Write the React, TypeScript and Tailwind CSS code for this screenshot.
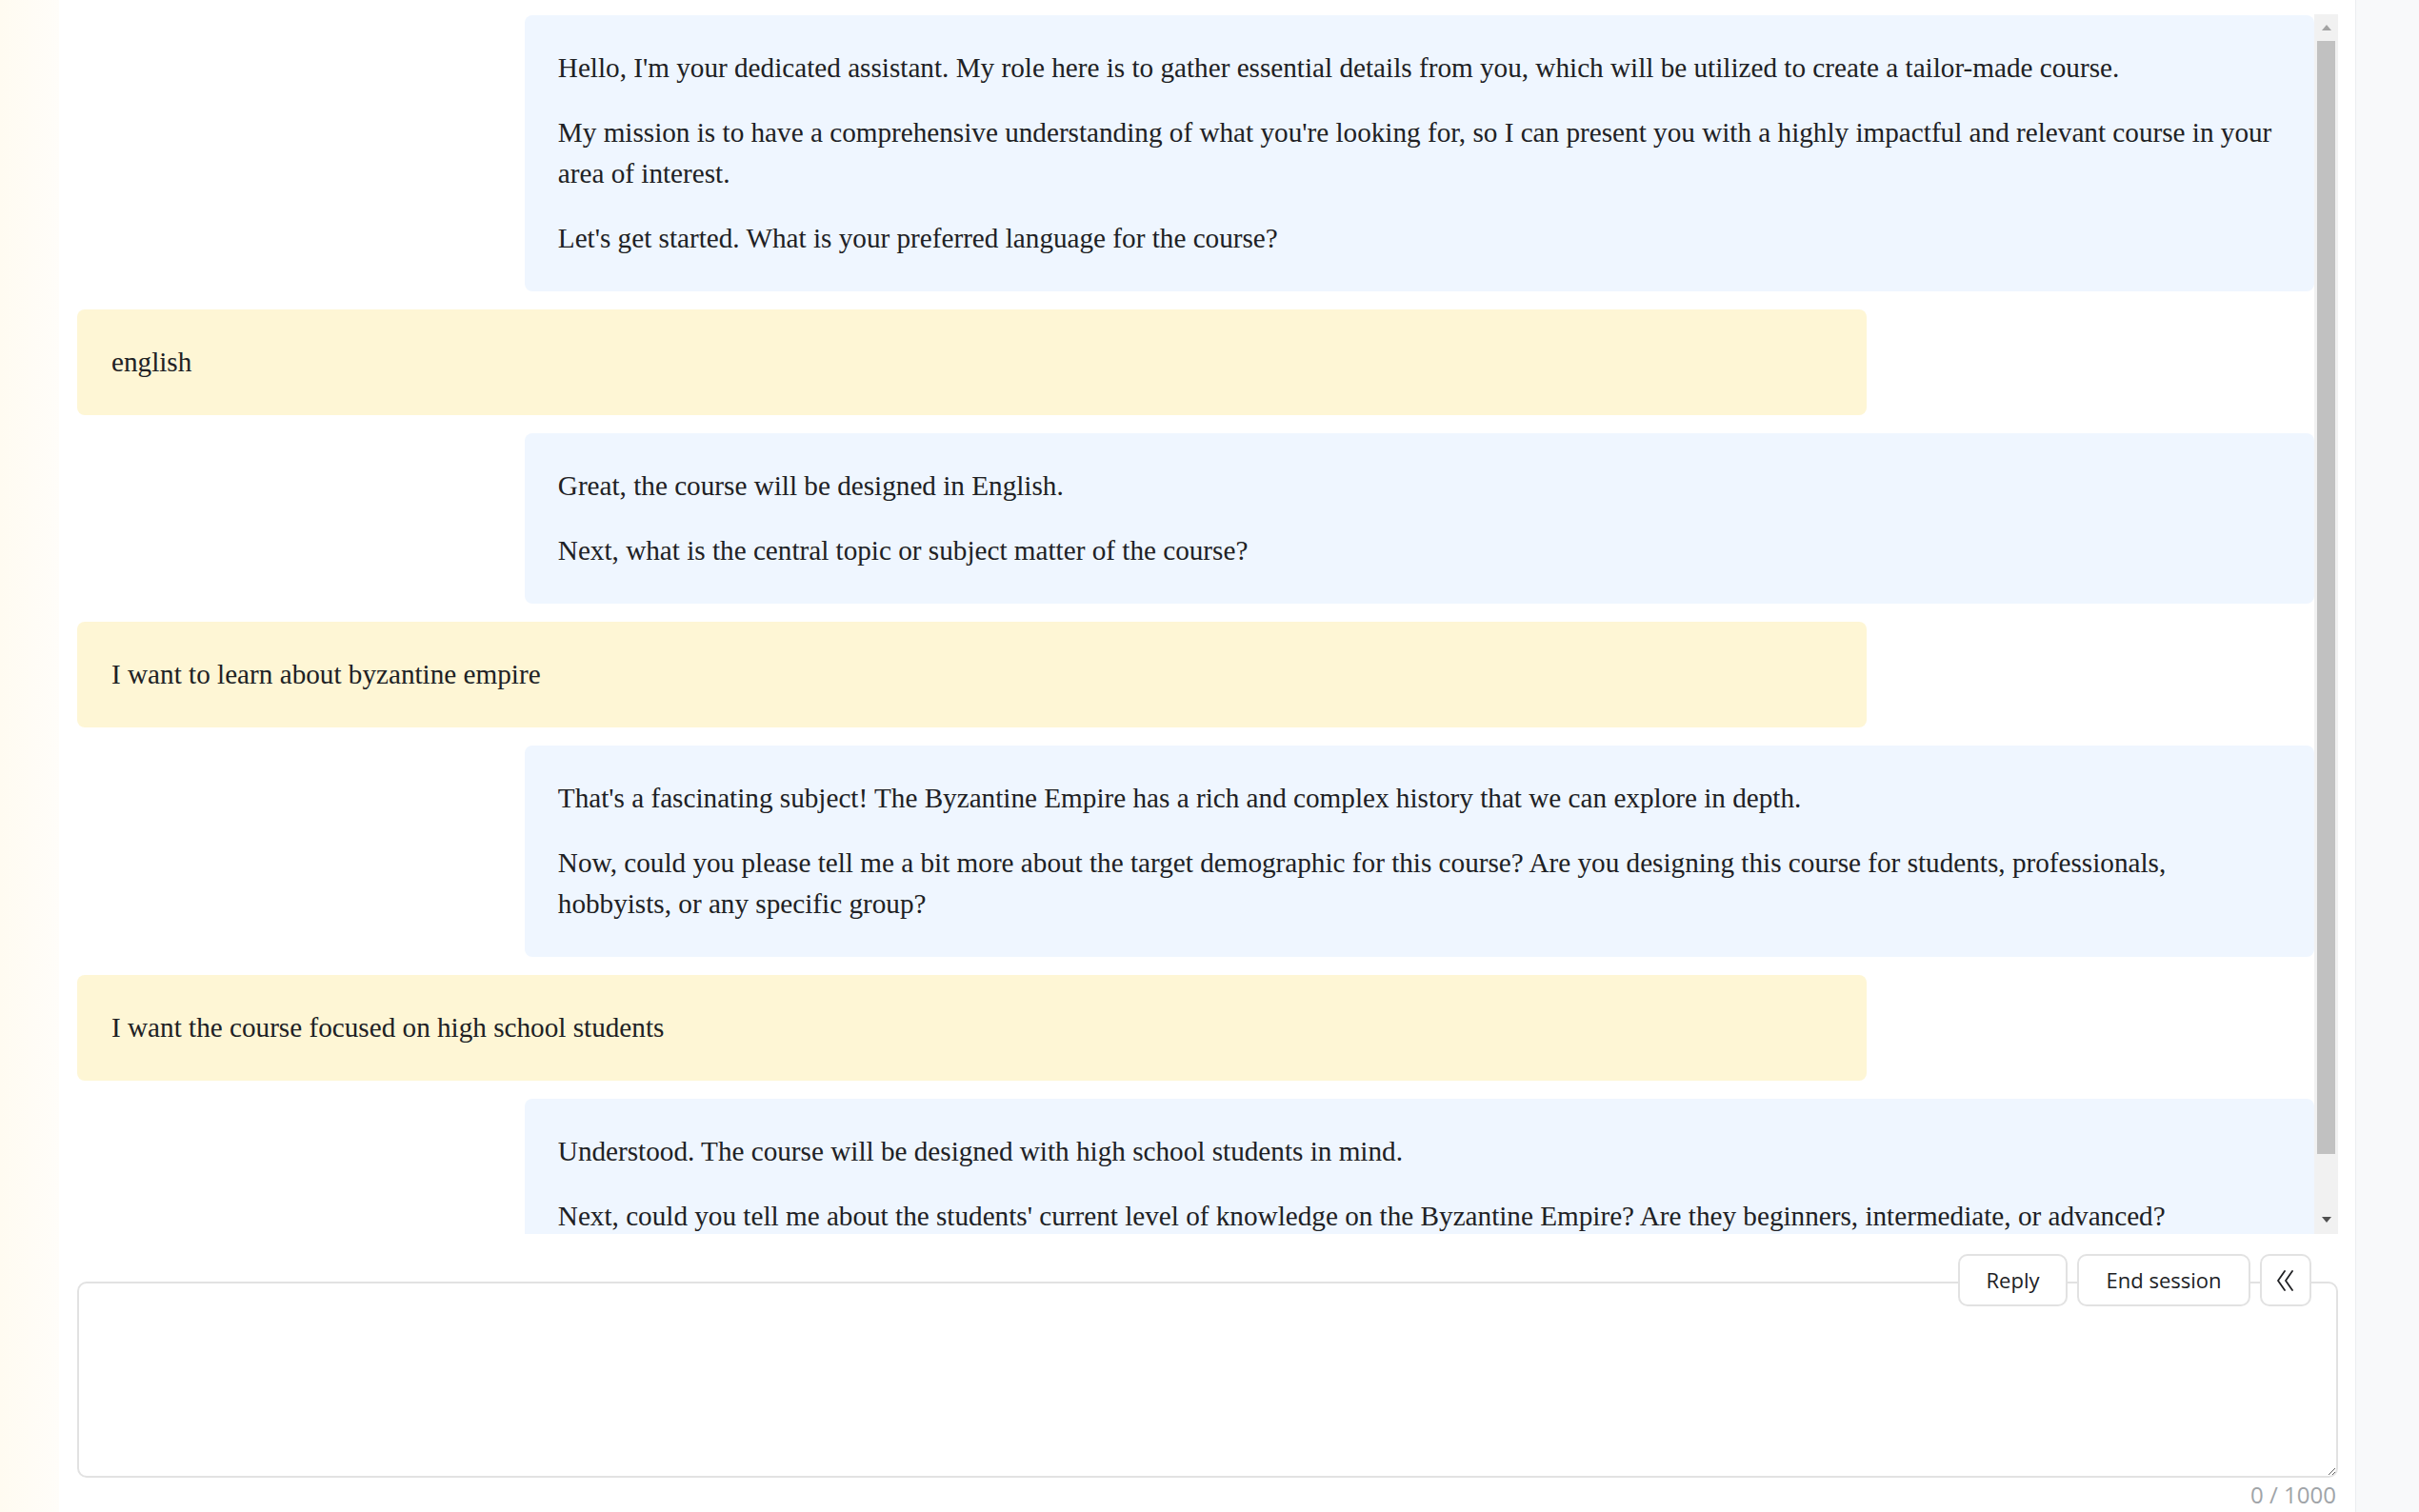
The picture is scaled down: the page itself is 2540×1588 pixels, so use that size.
import React from "react";

const serif = { fontFamily: '"Liberation Serif", "Times New Roman", serif' } as const;

function Bot({ paras }: { paras: React.ReactNode[] }) {
  return (
    <div className="ml-[20%] w-[80%] shrink-0 rounded-lg bg-[#eff6ff] px-[35px] py-[34px] text-[29.2px] leading-[43px] text-[#202124] flex flex-col gap-[25px]">
      {paras.map((p, i) => (
        <p key={i}>{p}</p>
      ))}
    </div>
  );
}

function User({ text }: { text: string }) {
  return (
    <div className="w-[80%] shrink-0 rounded-lg bg-[#fef6d5] px-[36px] py-[34px] text-[29.2px] leading-[43px] text-[#202124]">
      <p>{text}</p>
    </div>
  );
}

function Scrollbar() {
  return (
    <div className="flex h-full w-[25px] shrink-0 flex-col items-center bg-[#f1f1f1]">
      <div className="flex h-[28px] w-full items-center justify-center">
        <svg width="10" height="6" viewBox="0 0 10 6">
          <polygon points="5,0 10,6 0,6" fill="#a3a3a3" />
        </svg>
      </div>
      <div className="h-[1169px] w-[19px] bg-[#c1c1c1]" />
      <div className="flex-1" />
      <div className="flex h-[30px] w-full items-center justify-center">
        <svg width="10" height="6" viewBox="0 0 10 6">
          <polygon points="0,0 10,0 5,6" fill="#505050" />
        </svg>
      </div>
    </div>
  );
}

export default function App() {
  return (
    <div className="flex h-[1588px] w-[2540px] overflow-hidden bg-white" style={serif}>
      <div className="w-[62px] shrink-0 bg-gradient-to-r from-[#fffbf1] to-[#fffdf9]" />
      <div className="ml-[19px] flex w-[2374px] shrink-0 flex-col">
        <div className="mt-[15px] flex h-[1281px] shrink-0">
          <div className="flex flex-1 flex-col gap-[19px] overflow-hidden pt-[1px]">
            <Bot
              paras={[
                "Hello, I'm your dedicated assistant. My role here is to gather essential details from you, which will be utilized to create a tailor-made course.",
                <>
                  My mission is to have a comprehensive understanding of what you're looking for, so I can present you with a highly impactful and relevant course in your
                  <br />
                  area of interest.
                </>,
                "Let's get started. What is your preferred language for the course?",
              ]}
            />
            <User text="english" />
            <Bot
              paras={[
                "Great, the course will be designed in English.",
                "Next, what is the central topic or subject matter of the course?",
              ]}
            />
            <User text="I want to learn about byzantine empire" />
            <Bot
              paras={[
                "That's a fascinating subject! The Byzantine Empire has a rich and complex history that we can explore in depth.",
                <>
                  Now, could you please tell me a bit more about the target demographic for this course? Are you designing this course for students, professionals,
                  <br />
                  hobbyists, or any specific group?
                </>,
              ]}
            />
            <User text="I want the course focused on high school students" />
            <Bot
              paras={[
                "Understood. The course will be designed with high school students in mind.",
                "Next, could you tell me about the students' current level of knowledge on the Byzantine Empire? Are they beginners, intermediate, or advanced?",
              ]}
            />
          </div>
          <Scrollbar />
        </div>
        <div className="relative mt-[50px] h-[206px] shrink-0">
          <textarea className="h-full w-full resize-y rounded-[10px] border-2 border-[#e2e2e2] bg-white outline-none" />
          <div
            className="absolute right-[28px] top-[-29px] flex gap-[10px] text-[22px] text-[#202124]"
            style={{ fontFamily: '"Open Sans", "Liberation Sans", sans-serif' }}
          >
            <button className="flex h-[55px] w-[115px] items-center justify-center rounded-[10px] border-2 border-[#e2e2e2] bg-white">
              Reply
            </button>
            <button className="flex h-[55px] w-[182px] items-center justify-center rounded-[10px] border-2 border-[#e2e2e2] bg-white">
              End session
            </button>
            <button className="flex h-[55px] w-[54px] items-center justify-center rounded-[10px] border-2 border-[#e2e2e2] bg-white">
              <svg width="22" height="22" viewBox="0 0 22 22" fill="none" stroke="#202124" strokeWidth="1.8" strokeLinecap="round" strokeLinejoin="round">
                <polyline points="10,1 3,11 10,21" />
                <polyline points="18,1 11,11 18,21" />
              </svg>
            </button>
          </div>
        </div>
        <div
          className="h-[36px] pr-[2px] text-right text-[24px] leading-[36px] text-[#a0a4a8]"
          style={{ fontFamily: '"Open Sans", "Liberation Sans", sans-serif' }}
        >
          0 / 1000
        </div>
      </div>
      <div className="ml-[18px] flex-1 border-l border-[#eceef0] bg-[#f8f9fa]" />
    </div>
  );
}
